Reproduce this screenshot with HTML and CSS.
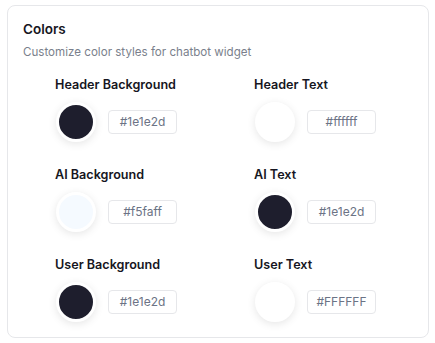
FILE: index.html
```html
<!DOCTYPE html>
<html lang="en">
<head>
  <meta charset="utf-8">
  <title>Colors</title>
  <link rel="stylesheet" href="styles.css">
</head>
<body>
<div class="card">
  <h2 class="card-title">Colors</h2>
  <p class="card-sub">Customize color styles for chatbot widget</p>

  <div class="color-grid">
    <div class="color-field">
      <label class="color-label">Header Background</label>
      <div class="color-row">
        <span class="swatch" style="background:#1e1e2d"></span>
        <span class="hex">#1e1e2d</span>
      </div>
    </div>
    <div class="color-field">
      <label class="color-label">Header Text</label>
      <div class="color-row">
        <span class="swatch" style="background:#ffffff"></span>
        <span class="hex">#ffffff</span>
      </div>
    </div>

    <div class="color-field">
      <label class="color-label">AI Background</label>
      <div class="color-row">
        <span class="swatch" style="background:#f5faff"></span>
        <span class="hex">#f5faff</span>
      </div>
    </div>
    <div class="color-field">
      <label class="color-label">AI Text</label>
      <div class="color-row">
        <span class="swatch" style="background:#1e1e2d"></span>
        <span class="hex">#1e1e2d</span>
      </div>
    </div>

    <div class="color-field">
      <label class="color-label">User Background</label>
      <div class="color-row">
        <span class="swatch" style="background:#1e1e2d"></span>
        <span class="hex">#1e1e2d</span>
      </div>
    </div>
    <div class="color-field">
      <label class="color-label">User Text</label>
      <div class="color-row">
        <span class="swatch" style="background:#FFFFFF"></span>
        <span class="hex">#FFFFFF</span>
      </div>
    </div>
  </div>
</div>
</body>
</html>
```

FILE: styles.css
```css
body {
  margin: 0;
  background: #fff;
  font-family: Inter, "Open Sans", sans-serif;
  color: #1e1e2d;
}
.card {
  box-sizing: border-box;
  width: 422px;
  height: 333px;
  margin: 5px 0 0 7px;
  padding: 14px 15px 15px 15px;
  border: 1px solid #e6e7ea;
  border-radius: 8px;
  background: #fff;
}
.card-title {
  margin: 0;
  font-size: 13.5px;
  line-height: 18px;
  font-weight: 600;
  color: #161622;
}
.card-sub {
  margin: 5px 0 0;
  font-size: 11.6px;
  line-height: 18px;
  color: #7a7f8c;
}
.color-grid {
  display: grid;
  grid-template-columns: 199px 1fr;
  row-gap: 23px;
  margin-top: 14px;
  padding-left: 32px;
}
.color-label {
  display: block;
  font-size: 12.6px;
  line-height: 20px;
  font-weight: 600;
  color: #161622;
}
.color-row {
  display: flex;
  align-items: center;
  gap: 12px;
  margin-top: 7px;
  padding-left: 1px;
}
.swatch {
  box-sizing: border-box;
  width: 40px;
  height: 40px;
  border: 3px solid #fff;
  border-radius: 50%;
  box-shadow: 0 2px 8px rgba(0, 0, 0, 0.1);
}
.hex {
  box-sizing: border-box;
  width: 69px;
  height: 24px;
  border: 1px solid #e6e7ea;
  border-radius: 4px;
  font-size: 12px;
  line-height: 22px;
  text-align: center;
  color: #6b7385;
}
```
